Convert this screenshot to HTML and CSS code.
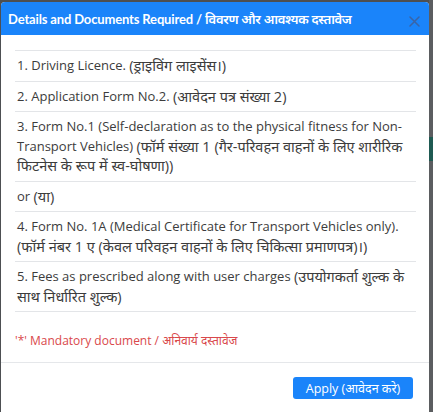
FILE: index.html
```html
<!DOCTYPE html>
<html lang="en">
<head>
<meta charset="utf-8">
<title>Details and Documents Required</title>
<link rel="stylesheet" href="styles.css">
</head>
<body>
<div class="backdrop-strip"><div class="teal"></div></div>
<div class="modal">
  <div class="modal-header">
    <h5 class="modal-title">Details and Documents Required / <span class="hi">विवरण और आवश्यक दस्तावेज</span></h5>
    <button class="close" type="button" aria-label="Close">
      <svg width="11" height="11" viewBox="0 0 11 11"><path d="M1 1 L10 10 M10 1 L1 10" stroke="#3a64a6" stroke-width="1.5" stroke-linecap="round"/></svg>
    </button>
  </div>
  <div class="modal-body">
    <div class="doc-list">
      <div class="doc-row">1. Driving Licence. <span class="dv">(ड्राइविंग लाइसेंस।)</span></div>
      <div class="doc-row">2. Application Form No.2. <span class="dv">(आवेदन पत्र संख्या 2)</span></div>
      <div class="doc-row">3. Form No.1 (Self-declaration as to the physical fitness for Non-Transport Vehicles) <span class="dv">(फॉर्म संख्या 1 (गैर-परिवहन वाहनों के लिए शारीरिक फिटनेस के रूप में स्व-घोषणा))</span></div>
      <div class="doc-row">or <span class="dv">(या)</span></div>
      <div class="doc-row">4. Form No. 1A (Medical Certificate for Transport Vehicles only). <span class="dv">(फॉर्म नंबर 1 ए (केवल परिवहन वाहनों के लिए चिकित्सा प्रमाणपत्र)।)</span></div>
      <div class="doc-row">5. Fees as prescribed along with user charges <span class="dv">(उपयोगकर्ता शुल्क के साथ निर्धारित शुल्क)</span></div>
    </div>
    <p class="mandatory">'*' Mandatory document / अनिवार्य दस्तावेज</p>
  </div>
  <div class="modal-footer">
    <button class="btn-apply" type="button">Apply (आवेदन करे)</button>
  </div>
</div>
</body>
</html>
```

FILE: styles.css
```css
* { box-sizing: border-box; }
html, body { margin: 0; padding: 0; }
body {
  background: #4d4f52;
  width: 433px;
  height: 412px;
  overflow: hidden;
  position: relative;
  font-family: "Open Sans", "Noto Sans", "Noto Sans Devanagari", sans-serif;
}
.backdrop-strip {
  position: absolute;
  right: 0;
  top: 0;
  width: 4px;
  height: 412px;
  background: #5b5d60;
}
.backdrop-strip .teal {
  margin-top: 137px;
  height: 24px;
  background: #1f5a52;
}
.modal {
  margin: 2px 4px 0 1px;
  width: 428px;
  height: 410px;
  background: #fff;
  border-radius: 4px 4px 0 0;
  overflow: hidden;
  display: flex;
  flex-direction: column;
}
.modal-header {
  height: 33px;
  background: #1a84fa;
  padding: 0 8px 0 7px;
  display: flex;
  align-items: center;
}
.modal-title {
  margin: 0;
  color: #fff;
  font-family: Lato, "Noto Sans", "Noto Sans Devanagari", sans-serif;
  font-size: 13px;
  font-weight: 700;
  letter-spacing: -0.15px;
  white-space: nowrap;
}
.modal-title .hi {
  font-family: "Open Sans", "Noto Sans", "Noto Sans Devanagari", sans-serif;
  font-weight: 600;
  font-size: 13px;
  letter-spacing: -0.3px;
}
.close {
  border: 0;
  background: transparent;
  padding: 0;
  margin-left: auto;
  margin-right: 1px;
  margin-top: 5px;
  display: flex;
}
.modal-body {
  padding: 15px 13px 0 14px;
  flex: 1;
  color: #3c3c3c;
  font-size: 13px;
}
.doc-row {
  border-top: 1px solid #e3e5e8;
  padding: 5px 2px;
  line-height: 19.5px;
}
.doc-row:last-child { border-bottom: 1px solid #e3e5e8; }
.dv {
  font-size: 14.5px;
  line-height: 19.5px;
  vertical-align: top;
}
.mandatory {
  margin: 20px 0 0 0;
  color: #d9484b;
  font-size: 12px;
  line-height: 18px;
}
.modal-footer {
  border-top: 1px solid #e5e7ea;
  height: 50px;
  padding: 14px 16px 0 0;
  display: flex;
  justify-content: flex-end;
  align-items: flex-start;
}
.btn-apply {
  background: #1a84fa;
  color: #fff;
  border: 0;
  border-radius: 3px;
  width: 120px;
  height: 22px;
  font-family: inherit;
  font-size: 12.5px;
  padding: 0;
}
```
